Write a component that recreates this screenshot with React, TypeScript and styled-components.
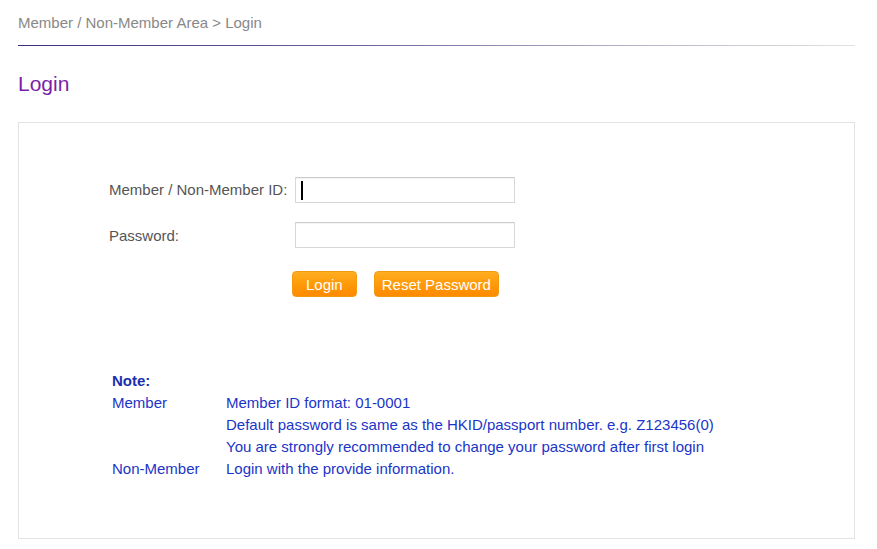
import styled, { createGlobalStyle } from "styled-components";
import { FC, Fragment } from "react";

const GlobalStyle = createGlobalStyle`
  html, body {
    margin: 0;
    padding: 0;
    background: #fff;
    font-family: "Liberation Sans", Arial, sans-serif;
  }
`;

const Page = styled.div`
  padding: 0 22px 0 18px;
  display: flex;
  flex-direction: column;
`;

const Breadcrumb = styled.div`
  height: 45px;
  display: flex;
  align-items: center;
  font-size: 15px;
  color: #888;
`;

const Divider = styled.div`
  height: 1px;
  background: linear-gradient(to right, #3a307e 0%, #6a5f9c 40%, #b9b6c6 75%, #e2e2e2 100%);
`;

const Title = styled.h1`
  margin: 0;
  height: 76px;
  display: flex;
  align-items: center;
  font-size: 21px;
  font-weight: normal;
  color: #7b1fa8;
`;

const Panel = styled.div`
  border: 1px solid #e3e3e3;
  box-sizing: border-box;
  height: 417px;
  padding: 54px 0 0 90px;
`;

const FormRow = styled.div`
  display: flex;
  align-items: center;
  height: 26px;
  margin-bottom: 19px;
`;

const Label = styled.label<{ $offset?: number }>`
  width: 186px;
  font-size: 15px;
  color: #555;
  margin-top: ${({ $offset }) => $offset ?? 0}px;
`;

const FieldWrap = styled.div`
  position: relative;
`;

const Field = styled.input`
  display: block;
  width: 220px;
  height: 26px;
  box-sizing: border-box;
  border: 1px solid #d6d9dc;
  border-top-color: #ccc;
  box-shadow: inset 0 1px 1px rgba(0, 0, 0, 0.05);
  padding: 0 6px;
  font-size: 15px;
  font-family: inherit;
  outline: none;
`;

const Caret = styled.span`
  position: absolute;
  left: 6px;
  top: 4px;
  width: 2px;
  height: 19px;
  background: #000;
`;

const Buttons = styled.div`
  display: flex;
  gap: 17px;
  padding-left: 183px;
  margin-top: 23px;
`;

const OrangeButton = styled.button<{ $pad: number }>`
  height: 26px;
  padding: 0 ${({ $pad }) => $pad}px;
  border: 1px solid #f39a10;
  border-radius: 4px;
  background: linear-gradient(to bottom, #ffae22 0%, #ff9a08 50%, #ff8a00 100%);
  color: #fff;
  font-size: 15px;
  font-family: inherit;
  cursor: pointer;
`;

const Note = styled.div`
  margin-top: 72px;
  padding-left: 3px;
  display: grid;
  grid-template-columns: 114px auto;
  grid-auto-rows: 22px;
  align-items: center;
  font-size: 15px;
  color: #1a35c8;
`;

const NoteTitle = styled.div`
  grid-column: 1 / span 2;
  font-weight: bold;
  color: #1a2fb0;
`;

interface NoteRow {
  term: string;
  text: string;
}

const notes: NoteRow[] = [
  { term: "Member", text: "Member ID format: 01-0001" },
  { term: "", text: "Default password is same as the HKID/passport number. e.g. Z123456(0)" },
  { term: "", text: "You are strongly recommended to change your password after first login" },
  { term: "Non-Member", text: "Login with the provide information." },
];

const App: FC = () => {
  return (
    <>
      <GlobalStyle />
      <Page>
        <Breadcrumb>Member / Non-Member Area &gt; Login</Breadcrumb>
        <Divider />
        <Title>Login</Title>
        <Panel>
          <FormRow>
            <Label htmlFor="memberId" $offset={-2}>
              Member / Non-Member ID:
            </Label>
            <FieldWrap>
              <Field id="memberId" type="text" />
              <Caret />
            </FieldWrap>
          </FormRow>
          <FormRow>
            <Label htmlFor="password">Password:</Label>
            <FieldWrap>
              <Field id="password" type="password" />
            </FieldWrap>
          </FormRow>
          <Buttons>
            <OrangeButton $pad={13}>Login</OrangeButton>
            <OrangeButton $pad={7}>Reset Password</OrangeButton>
          </Buttons>
          <Note>
            <NoteTitle>Note:</NoteTitle>
            {notes.map((n, i) => (
              <Fragment key={i}>
                <div>{n.term}</div>
                <div>{n.text}</div>
              </Fragment>
            ))}
          </Note>
        </Panel>
      </Page>
    </>
  );
};

export default App;
